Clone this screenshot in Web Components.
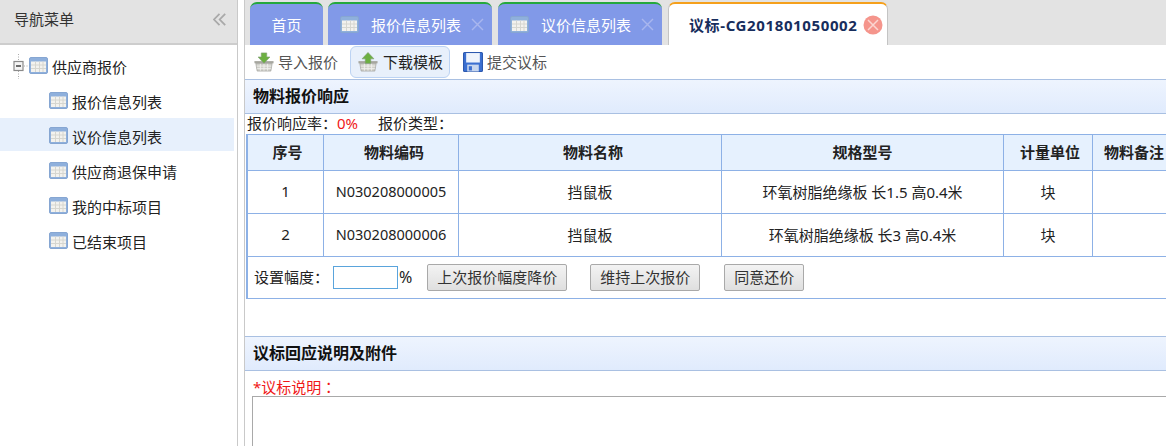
<!DOCTYPE html>
<html lang="zh">
<head>
<meta charset="utf-8">
<title>议标</title>
<style>
  html, body { margin: 0; height: 446px; overflow: hidden; background: #fff; }
  body { font: 15px "Noto Sans", "Noto Sans CJK SC", sans-serif; color: #222; }
  .colon { font-family: "Noto Sans CJK TC", sans-serif; }
</style>
</head>
<body>

<template id="app-shell-tpl">
  <style>
    :host { display: flex; height: 446px; overflow: hidden; }
    .side { flex: 0 0 238px; box-sizing: border-box; border-right: 1px solid #c9c9c9; }
    .gap { flex: 0 0 6px; border-right: 1px solid #c9c9c9; }
    .main { flex: 1; min-width: 0; overflow: hidden; }
  </style>
  <div class="side"><slot name="side"></slot></div>
  <div class="gap"></div>
  <div class="main"><slot></slot></div>
</template>

<template id="nav-sidebar-tpl">
  <style>
    :host { display: block; }
    header {
      height: 43px; background: #e3e3e3;
      border-bottom: 2px solid #cdcdcd;
      display: flex; align-items: center; justify-content: space-between;
      padding: 0 11px 0 14px; font-size: 15px; color: #333;
    }
    header span { margin-top: -6px; }
    svg { display: block; margin-top: -5px; }
    .tree { padding: 4px 3px 0 0; }
  </style>
  <header>
    <span>导航菜单</span>
    <svg width="13" height="13" viewBox="0 0 13 13" fill="none" stroke="#a9a9a9" stroke-width="1.800">
      <path d="M6.500 .8 1 6.500l5.500 5.700M12.200 .8 6.700 6.500l5.500 5.700"/>
    </svg>
  </header>
  <div class="tree"><slot></slot></div>
</template>

<template id="nav-item-tpl">
  <style>
    :host { display: flex; align-items: center; height: 35px; padding-left: 49px; color: #222; }
    :host([root]) { padding-left: 12px; }
    :host([active]) {
      box-sizing: border-box; height: 33px; margin: -1px 0 3px; padding-top: 4px; background: #e7f0fc;
    }
    .toggle { display: none; width: 17px; height: 25px; }
    :host([root]) .toggle { display: block; }
    .ico { width: 19px; height: 17px; margin: -3px 4px 0 0; flex: none; }
    span { white-space: nowrap; }
  </style>
  <svg class="toggle" viewBox="0 0 17 25">
    <path d="M6.500 0v7M6.500 17v8M12 12h5" stroke="#aaa" stroke-dasharray="1 1.500" fill="none"/>
    <rect x="2" y="7.500" width="9" height="9" fill="#f4f4f4" stroke="#8a8a8a" stroke-width="1.200"/>
    <path d="M4 12h5" stroke="#222" stroke-width="1.300"/>
  </svg>
  <ui-icon class="ico" name="grid"></ui-icon>
  <span><slot></slot></span>
</template>

<template id="tab-bar-tpl">
  <style>
    :host {
      display: flex; gap: 5px; height: 43px; padding: 2px 0 0 5px;
      background: #e3e3e3; align-items: stretch;
    }
  </style>
  <slot></slot>
</template>

<template id="tab-item-tpl">
  <style>
    :host {
      display: flex; align-items: center; box-sizing: border-box;
      background: #8199e8; color: #fff; border-top: 2px solid #25a83c;
      border-radius: 7px 7px 0 0; font-size: 15px; white-space: nowrap; padding: 0 8px 0 12px;
    }
    :host([plain]) { justify-content: center; padding: 0; }
    :host([active]) {
      background: #fff; color: #172d5c; border: 1px solid #c4c4c4; border-top: 2px solid #f5a01c;
      border-bottom: 0; font-weight: 700; padding: 0 2px 0 20px; margin-left: 1px; letter-spacing: .62px;
    }
    .ico { width: 19px; height: 17px; margin-right: 12px; flex: none; }
    .x { width: 13px; height: 13px; margin-left: 10px; }
    .xr { width: 20px; height: 20px; margin-left: 5px; flex: none; }
  </style>
  <ui-icon class="ico" name="grid"></ui-icon>
  <span><slot></slot></span>
  <svg class="x" viewBox="0 0 13 13"><path d="M1 1l11 11M12 1 1 12" stroke="#a9b6ee" stroke-width="1.400"/></svg>
  <svg class="xr" viewBox="0 0 20 20"><circle cx="10" cy="10" r="9.500" fill="#f5958c"/><path d="M5 5l10 10M15 5 5 15" stroke="#fbd6d1" stroke-width="1.500"/></svg>
</template>

<template id="tool-bar-tpl">
  <style>
    :host { display: flex; align-items: center; height: 34px; padding-left: 5px; gap: 5px; }
  </style>
  <slot></slot>
</template>

<template id="tool-button-tpl">
  <style>
    :host {
      display: flex; align-items: center; gap: 4px; height: 32px; box-sizing: border-box;
      padding: 0 6px 0 3px; border: 1px solid transparent; border-radius: 6px; color: #555; white-space: nowrap;
    }
    :host([hot]) { background: #e8f0fb; border-color: #bcd3f3; color: #222; padding-left: 7px; gap: 5px; }
    :host(:last-child) { padding-left: 7px; }
    ui-icon { width: 20px; height: 20px; flex: none; }
    span { margin-top: -1px; }
  </style>
  <ui-icon></ui-icon>
  <span><slot></slot></span>
</template>

<template id="panel-head-tpl">
  <style>
    :host {
      display: flex; align-items: center; height: 30px; padding: 0 0 3px 8px;
      border: solid #a9c0e2; border-width: 1px 0;
      background: linear-gradient(#eef4fe, #e0ebfd);
      font-size: 16px; font-weight: 700; color: #111; margin-bottom: -1px;
    }
  </style>
  <slot></slot>
</template>

<template id="quote-table-tpl">
  <style>
    :host {
      display: block; margin-left: 1px; width: 1000px;
      border: solid #8db1e6; border-width: 1px 0 1px 2px; color: #222;
    }
    .colon { font-family: "Noto Sans CJK TC", sans-serif; }
    .row {
      display: grid; grid-template-columns: 76px 135px 263px 282px 89px 100px;
      border-bottom: 1px solid #8db1e6;
    }
    .row > div {
      display: flex; align-items: center; justify-content: center; padding-bottom: 2px;
      border-right: 1px solid #8db1e6; box-sizing: border-box; height: 42px; white-space: nowrap;
    }
    .row > .code { font-size: 14.500px; }
    .head > div { height: 35px; background: #e6f1fe; font-weight: 700; color: #222; }
    .head > .p4 { padding-left: 4px; }
    .head > .p6 { padding-left: 6px; }
    .head > .last { justify-content: flex-start; padding-left: 11px; }
    .foot { display: flex; align-items: center; height: 41px; padding-left: 6px; white-space: nowrap; }
    .foot span { margin-top: -2px; }
    input {
      width: 65px; height: 23px; padding: 0; margin: 0 0 0 4px; box-sizing: border-box;
      border: 1px solid #5aa4dc; background: #fff;
    }
    button {
      height: 27px; padding: 0 9px 2px; font: inherit; color: #333; white-space: nowrap;
      border: 1px solid #a9a9a9; border-radius: 2px; background: linear-gradient(#f3f3f3, #dfdfdf);
    }
    .pct { margin: 0 15px 0 1px; font-size: 16px; }
    button + button { margin-left: 23px; }
    button.b3 { margin-left: 24px; }
  </style>
  <div class="row head">
    <div class="p4">序号</div><div class="p6">物料编码</div><div class="p6">物料名称</div><div>规格型号</div><div class="p4">计量单位</div><div class="last">物料备注</div>
  </div>
  <div class="row">
    <div>1</div><div class="code">N030208000005</div><div>挡鼠板</div><div>环氧树脂绝缘板 长1.5 高0.4米</div><div>块</div><div></div>
  </div>
  <div class="row">
    <div>2</div><div class="code">N030208000006</div><div>挡鼠板</div><div>环氧树脂绝缘板 长3 高0.4米</div><div>块</div><div></div>
  </div>
  <div class="foot">
    <span>设置幅度<span class="colon">：</span></span><input type="text" aria-label="设置幅度"><span class="pct">%</span>
    <button>上次报价幅度降价</button><button>维持上次报价</button><button class="b3">同意还价</button>
  </div>
</template>

<script>
const BASKET = `<path d="M.5 10h21v2.500H.5z" fill="#a8a8a0"/>
    <path d="M2 12.500h18l-1.500 8.500h-15z" fill="#cfcfc9" stroke="#9a9a94" stroke-width=".7"/>
    <path d="M7 13v7.500M11 13v7.500M15 13v7.500M3 15.500h16M3.500 18.300h15" stroke="#f2f2ee"/>`;

const ICONS = {
  grid: `<svg viewBox="0 0 19 17">
    <rect x=".5" y=".5" width="18" height="16" rx="1.500" fill="#8fb0dc" stroke="#86a6d2"/>
    <rect x="2" y="4.500" width="15" height="10.500" fill="#f3f2ee"/>
    <path d="M2 8h15M2 11.500h15M6.500 4.500V15M10.500 4.500V15M14 4.500V15" stroke="#d6d6d0"/>
  </svg>`,
  'basket-down': `<svg viewBox="0 0 22 22">
    ${BASKET}
    <path d="M8 1h6v4.500h3.500L11 12.500 4.500 5.500H8z" fill="#6cb041" stroke="#7f9f72" stroke-width=".7"/>
  </svg>`,
  'basket-up': `<svg viewBox="0 0 22 22">
    ${BASKET}
    <path d="M8 12.500h6V7.500h3.500L11 .5 4.500 7.500H8z" fill="#6cb041" stroke="#7f9f72" stroke-width=".7"/>
  </svg>`,
  floppy: `<svg viewBox="0 0 19 19">
    <rect x=".5" y=".5" width="18" height="18" rx="1" fill="#3b6fd0" stroke="#2c58ae"/>
    <rect x="3" y="1" width="13" height="9" fill="#eef3fb"/>
    <rect x="4" y="12" width="11" height="6.500" fill="#c7d6ee"/>
    <rect x="5.500" y="13.500" width="3" height="4" fill="#3b6fd0"/>
  </svg>`
};

function shadowFrom(el, id) {
  const tpl = document.getElementById(id).content;
  const root = el.attachShadow({mode: 'open'});
  root.appendChild(document.importNode(tpl, true));
  return root;
}

class UiIcon extends HTMLElement {
  static get observedAttributes() { return ['name']; }
  constructor() {
    super();
    this.attachShadow({mode: 'open'});
  }
  attributeChangedCallback(attr, old, name) {
    this.shadowRoot.innerHTML = `<style>:host{display:block}svg{display:block;width:100%;height:100%}</style>` +
      (ICONS[name] || '');
  }
}
customElements.define('ui-icon', UiIcon);

// elements that only need their template cloned
for (const name of ['app-shell', 'nav-sidebar', 'nav-item', 'tab-bar', 'tool-bar', 'panel-head', 'quote-table']) {
  customElements.define(name, class extends HTMLElement {
    constructor() {
      super();
      shadowFrom(this, name + '-tpl');
    }
  });
}

class TabItem extends HTMLElement {
  connectedCallback() {
    const root = shadowFrom(this, 'tab-item-tpl');
    if (this.hasAttribute('plain') || this.hasAttribute('active')) {
      root.querySelector('.ico').remove();
      root.querySelector('.x').remove();
    }
    if (!this.hasAttribute('active')) root.querySelector('.xr').remove();
    this.style.width = this.getAttribute('w') + 'px';
  }
}
customElements.define('tab-item', TabItem);

class ToolButton extends HTMLElement {
  connectedCallback() {
    const root = shadowFrom(this, 'tool-button-tpl');
    root.querySelector('ui-icon').setAttribute('name', this.getAttribute('icon'));
  }
}
customElements.define('tool-button', ToolButton);
</script>

<app-shell>
  <nav-sidebar slot="side">
    <nav-item root>供应商报价</nav-item>
    <nav-item>报价信息列表</nav-item>
    <nav-item active>议价信息列表</nav-item>
    <nav-item>供应商退保申请</nav-item>
    <nav-item>我的中标项目</nav-item>
    <nav-item>已结束项目</nav-item>
  </nav-sidebar>

  <tab-bar>
    <tab-item plain w="73">首页</tab-item>
    <tab-item w="164">报价信息列表</tab-item>
    <tab-item w="164" style="margin-left:1px">议价信息列表</tab-item>
    <tab-item active w="220">议标-CG201801050002</tab-item>
  </tab-bar>
  <tool-bar>
    <tool-button icon="basket-down">导入报价</tool-button>
    <tool-button icon="basket-up" hot>下载模板</tool-button>
    <tool-button icon="floppy">提交议标</tool-button>
  </tool-bar>
  <panel-head>物料报价响应</panel-head>
  <div style="display:flex;height:21px;align-items:center;padding:0 0 2px 2px;box-sizing:border-box;white-space:nowrap;color:#222">
    <span>报价响应率<span class="colon">：</span></span><span style="color:#f01818">0%</span><span style="margin-left:20px">报价类型<span class="colon">：</span></span>
  </div>
  <quote-table></quote-table>
  <div style="height:37px"></div>
  <panel-head>议标回应说明及附件</panel-head>
  <div style="height:26px;display:flex;align-items:flex-end;padding:0 0 0 8px;box-sizing:border-box;color:#f01818;line-height:18px">*议标说明<span class="colon">：</span></div>
  <div style="margin-left:7px;height:60px;border:1px solid #a9a9a9;border-right:0"></div>
</app-shell>
</body>
</html>
